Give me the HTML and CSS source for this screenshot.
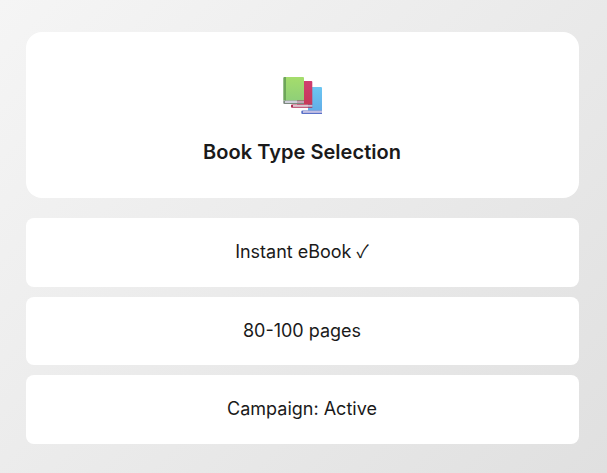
FILE: index.html
```html
<!DOCTYPE html>
<html lang="en">
<head>
<meta charset="utf-8">
<title>Book Type Selection</title>
<link rel="stylesheet" href="styles.css">
</head>
<body>
<main class="page">
  <section class="hero">
    <svg class="hero-icon" width="48" height="48" viewBox="0 0 48 48" aria-hidden="true">
      <defs>
        <linearGradient id="g" x1="0" y1="0" x2="0" y2="1"><stop offset="0" stop-color="#a5dd6c"/><stop offset="1" stop-color="#8fcf78"/></linearGradient>
        <linearGradient id="r" x1="0" y1="0" x2="0" y2="1"><stop offset="0" stop-color="#cf3d70"/><stop offset="1" stop-color="#c63a58"/></linearGradient>
        <linearGradient id="b" x1="0" y1="0" x2="0" y2="1"><stop offset="0" stop-color="#6cc6f2"/><stop offset="1" stop-color="#62aee8"/></linearGradient>
      </defs>
      <path d="M28 14h13a1 1 0 0 1 1 1v22.500H28z" fill="url(#b)"/>
      <path d="M22.300 37.500H42v.8H23.300v1.700H42V41H22.300a1 1 0 0 1-1-1v-1.500a1 1 0 0 1 1-1z" fill="#5a72c8"/>
      <rect x="23.300" y="38.300" width="18.700" height="1.700" fill="#b9b6e0"/>
      <path d="M17 8h14.300a1 1 0 0 1 1 1v22.500H17z" fill="url(#r)"/>
      <path d="M12 31.500h20.300v.7H13v1.400h19.300v1.100H12a1 1 0 0 1-1-1v-1.200a1 1 0 0 1 1-1z" fill="#b02c55"/>
      <rect x="13" y="32.200" width="19.300" height="1.400" fill="#d9c6cf"/>
      <path d="M5 4h18a1 1 0 0 1 1 1v22.500H5z" fill="url(#g)"/>
      <path d="M3.300 5a1 1 0 0 1 1-1h1.700v23.500H3.300z" fill="#6ea65a"/>
      <path d="M3.300 27.500H24v.8H5v1.400h19V31H4.300a1 1 0 0 1-1-1z" fill="#7d8a80"/>
      <rect x="5" y="28.300" width="19" height="1.400" fill="#c9c6d8"/>
    </svg>
    <h1 class="hero-title">Book Type Selection</h1>
  </section>
  <ul class="options">
    <li class="option">Instant eBook <span class="check">✓</span></li>
    <li class="option">80-100 pages</li>
    <li class="option">Campaign: Active</li>
  </ul>
</main>
</body>
</html>
```
FILE: styles.css
```css
html, body {
  margin: 0;
  height: 100%;
  background: #fff;
}
body {
  font-family: Inter, "Liberation Sans", sans-serif;
  color: #1a1a1a;
  overflow: hidden;
}
.page {
  box-sizing: border-box;
  height: 100%;
  background: linear-gradient(135deg, #f5f5f5, #e0e0e0);
  padding: 32px 28px 0 26px;
  display: flex;
  flex-direction: column;
  gap: 20px;
}
.hero {
  background: #fff;
  border-radius: 16px;
  height: 166px;
  box-sizing: border-box;
  padding: 41px 0 0;
  display: flex;
  flex-direction: column;
  align-items: center;
}
.hero-icon {
  display: block;
  margin-left: 3px;
}
.hero-title {
  margin: 16px 1px 0 0;
  font-size: 20px;
  line-height: 30px;
  font-weight: 600;
  letter-spacing: 0.04px;
}
.options {
  list-style: none;
  margin: 0;
  padding: 0;
  display: flex;
  flex-direction: column;
  gap: 10px;
}
.option {
  background: #fff;
  border-radius: 8px;
  padding: 20px 21px 20px 20px;
  font-size: 18px;
  line-height: 28.6px;
  text-align: center;
}
.check {
  font-family: "Noto Sans CJK JP", sans-serif;
  line-height: 0;
}
```
